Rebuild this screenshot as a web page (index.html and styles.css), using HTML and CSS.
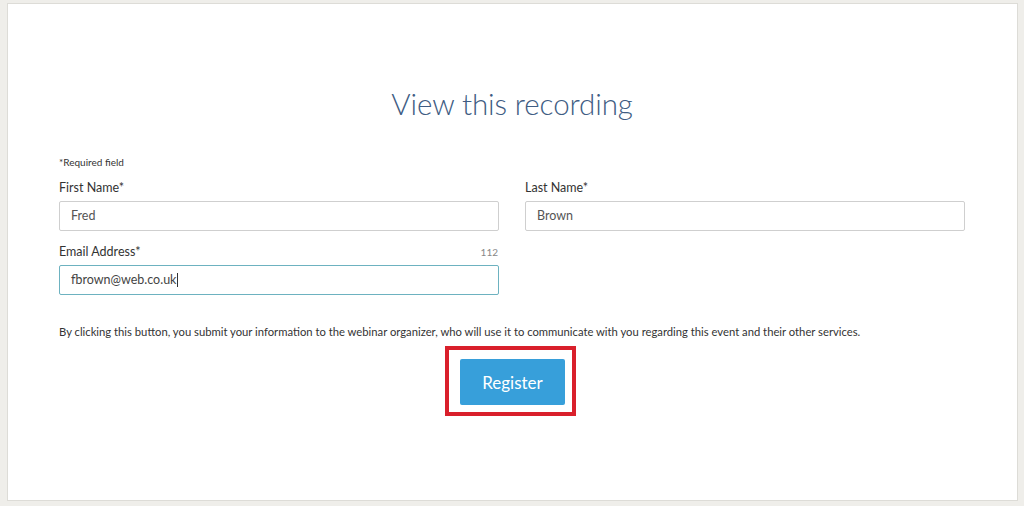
FILE: index.html
```html
<!DOCTYPE html>
<html lang="en">
<head>
<meta charset="utf-8">
<title>View this recording</title>
<link rel="stylesheet" href="styles.css">
</head>
<body>
<div class="panel">
  <h1 class="title">View this recording</h1>
  <form class="form">
    <div class="required">*Required field</div>
    <div class="row">
      <div class="field">
        <div class="label-row"><label class="label">First Name*</label></div>
        <div class="input">Fred</div>
      </div>
      <div class="field">
        <div class="label-row"><label class="label">Last Name*</label></div>
        <div class="input">Brown</div>
      </div>
    </div>
    <div class="row">
      <div class="field">
        <div class="label-row"><label class="label">Email Address*</label><span class="count">112</span></div>
        <div class="input focus">fbrown@web.co.uk<span class="caret"></span></div>
      </div>
      <div class="field"></div>
    </div>
    <p class="disclaimer">By clicking this button, you submit your information to the webinar organizer, who will use it to communicate with you regarding this event and their other services.</p>
    <div class="actions">
      <div class="highlight"><button type="button" class="btn">Register</button></div>
    </div>
  </form>
</div>
</body>
</html>
```
FILE: styles.css
```css
html, body { margin: 0; padding: 0; }
body {
  background: #efeeea;
  width: 1024px;
  height: 506px;
  padding: 3px 6px 5px 7px;
  box-sizing: border-box;
  font-family: Lato, "Open Sans", sans-serif;
  color: #333;
}
.panel {
  background: #fff;
  border: 1px solid #dddcd7;
  height: 100%;
  box-sizing: border-box;
  padding: 0 52px 0 51px;
}
.title {
  margin: 80px 0 0;
  text-align: center;
  font-weight: 300;
  font-size: 29.5px;
  line-height: 40px;
  color: #405c83;
  letter-spacing: -0.1px;
}
.form { margin-top: 32px; }
.required { font-size: 10px; line-height: 12px; color: #333; }
.row { display: flex; gap: 26px; margin-top: 12px; }
.row + .row { margin-top: 13px; }
.field { flex: 1; }
.label-row { display: flex; justify-content: space-between; align-items: baseline; height: 16px; }
.label { font-size: 12.5px; line-height: 16px; color: #333; }
.count { font-size: 10px; color: #888; padding-right: 1px; }
.input {
  margin-top: 5px;
  height: 30px;
  border: 1px solid #cfcfcf;
  border-radius: 2px;
  box-sizing: border-box;
  padding: 0 11px;
  font-size: 12.5px;
  line-height: 28px;
  color: #555;
  display: flex;
  align-items: center;
}
.input.focus { border-color: #6db2c0; color: #444; }
.caret { display: inline-block; width: 1px; height: 14px; background: #333; margin-left: 1px; }
.disclaimer { margin: 30px 0 0; font-size: 11.25px; line-height: 14px; color: #333; }
.actions { display: flex; justify-content: center; margin-top: 7px; padding-right: 3px; }
.highlight {
  border: 4px solid #d9202b;
  padding: 9px 7px 7px 11px;
}
.btn {
  display: block;
  width: 105px;
  height: 46px;
  background: #379fda;
  border: none;
  border-radius: 2px;
  color: #fff;
  font-family: Lato, "Open Sans", sans-serif;
  font-size: 17px;
  cursor: pointer;
}
```
